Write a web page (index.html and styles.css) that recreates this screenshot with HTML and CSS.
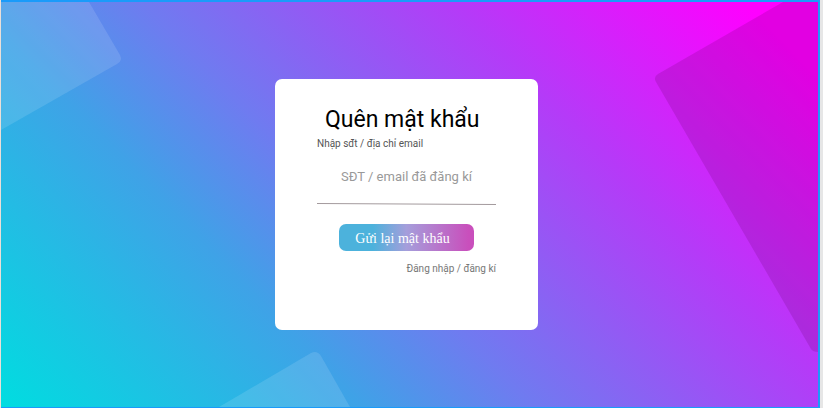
FILE: index.html
```html
<!DOCTYPE html>
<html lang="vi">
<head>
<meta charset="utf-8">
<meta name="viewport" content="width=device-width, initial-scale=1">
<title>Quên mật khẩu</title>
<link rel="stylesheet" href="styles.css">
</head>
<body>
<main class="page">
  <svg class="shapes" viewBox="0 0 817 405" preserveAspectRatio="none" aria-hidden="true">
    <path d="M0 0H88L119 53Q122 59 116 62L0 128Z" fill="#fff" fill-opacity=".12"/>
    <path d="M218 405L310 351Q316 348 320 354L349 405Z" fill="#fff" fill-opacity=".12"/>
    <path d="M782 0L657 72Q652 75 655 80L810 347Q812 350 817 350V0Z" fill="#600060" fill-opacity=".18"/>
  </svg>
  <form class="card">
    <h1 class="title">Quên mật khẩu</h1>
    <label class="label" for="account">Nhập sđt / địa chỉ email</label>
    <input class="field" id="account" type="text" placeholder="SĐT / email đã đăng kí">
    <svg class="rule" viewBox="0 0 179 2" preserveAspectRatio="none" aria-hidden="true">
      <path d="M0 .5L179 1.5" stroke="#a39a9d" stroke-width="1"/>
    </svg>
    <button class="submit" type="button">Gửi lại mật khẩu</button>
    <a class="link" href="#">Đăng nhập / đăng kí</a>
  </form>
</main>
</body>
</html>
```
FILE: styles.css
```css
* {
  box-sizing: border-box;
}

body {
  margin: 0;
  padding: 0 3px 0 1px;
  background: linear-gradient(90deg, #eadfd8 1px, #e6e6e6 1px);
  font-family: Roboto, "Liberation Sans", sans-serif;
}

.page {
  position: relative;
  display: flex;
  align-items: center;
  justify-content: center;
  min-height: 100vh;
  padding-right: 6px;
  border: solid #1a9bfa;
  border-width: 2px 2px 1px 0;
  background: linear-gradient(46deg, #00dde0, #3fa2e7 30%, #6f7bf0 44%, #b53af8 70%, #ff00ff 94%);
  background-clip: padding-box;
}

.shapes {
  position: absolute;
  inset: 0;
  width: 100%;
  height: 100%;
}

.card {
  position: relative;
  display: flex;
  flex-direction: column;
  width: 263px;
  min-height: 251px;
  padding: 25px 42px 24px;
  border-radius: 7px;
  background: #fff;
}

.title {
  margin: 0;
  padding: 0 8px;
  color: #000;
  font-size: 23px;
  font-weight: 400;
  line-height: 32px;
  white-space: nowrap;
}

.label {
  color: #555;
  font-size: 10px;
  line-height: 16px;
}

.field {
  width: 100%;
  height: 32px;
  margin: 9px 0 10px;
  padding: 0;
  border: 0;
  outline: 0;
  background: none;
  color: #555;
  font: 13px/32px Roboto, "Liberation Sans", sans-serif;
  text-align: center;
}

.field::placeholder {
  color: #999;
  opacity: 1;
}

.rule {
  width: 100%;
  height: 2px;
}

.submit {
  align-self: center;
  width: 135px;
  height: 27px;
  margin: 19px 0 8px;
  padding: 2px 24px 0 16px;
  border: 0;
  border-radius: 7px;
  background: linear-gradient(90deg, #4cb2dc 25%, #a59edb 50%, #c94fbc 96%);
  color: #fff;
  font: 14px/24px "Liberation Serif", serif;
  text-align: center;
  white-space: nowrap;
}

.link {
  align-self: flex-end;
  color: #777;
  font-size: 10px;
  line-height: 20px;
  text-decoration: none;
}
```
